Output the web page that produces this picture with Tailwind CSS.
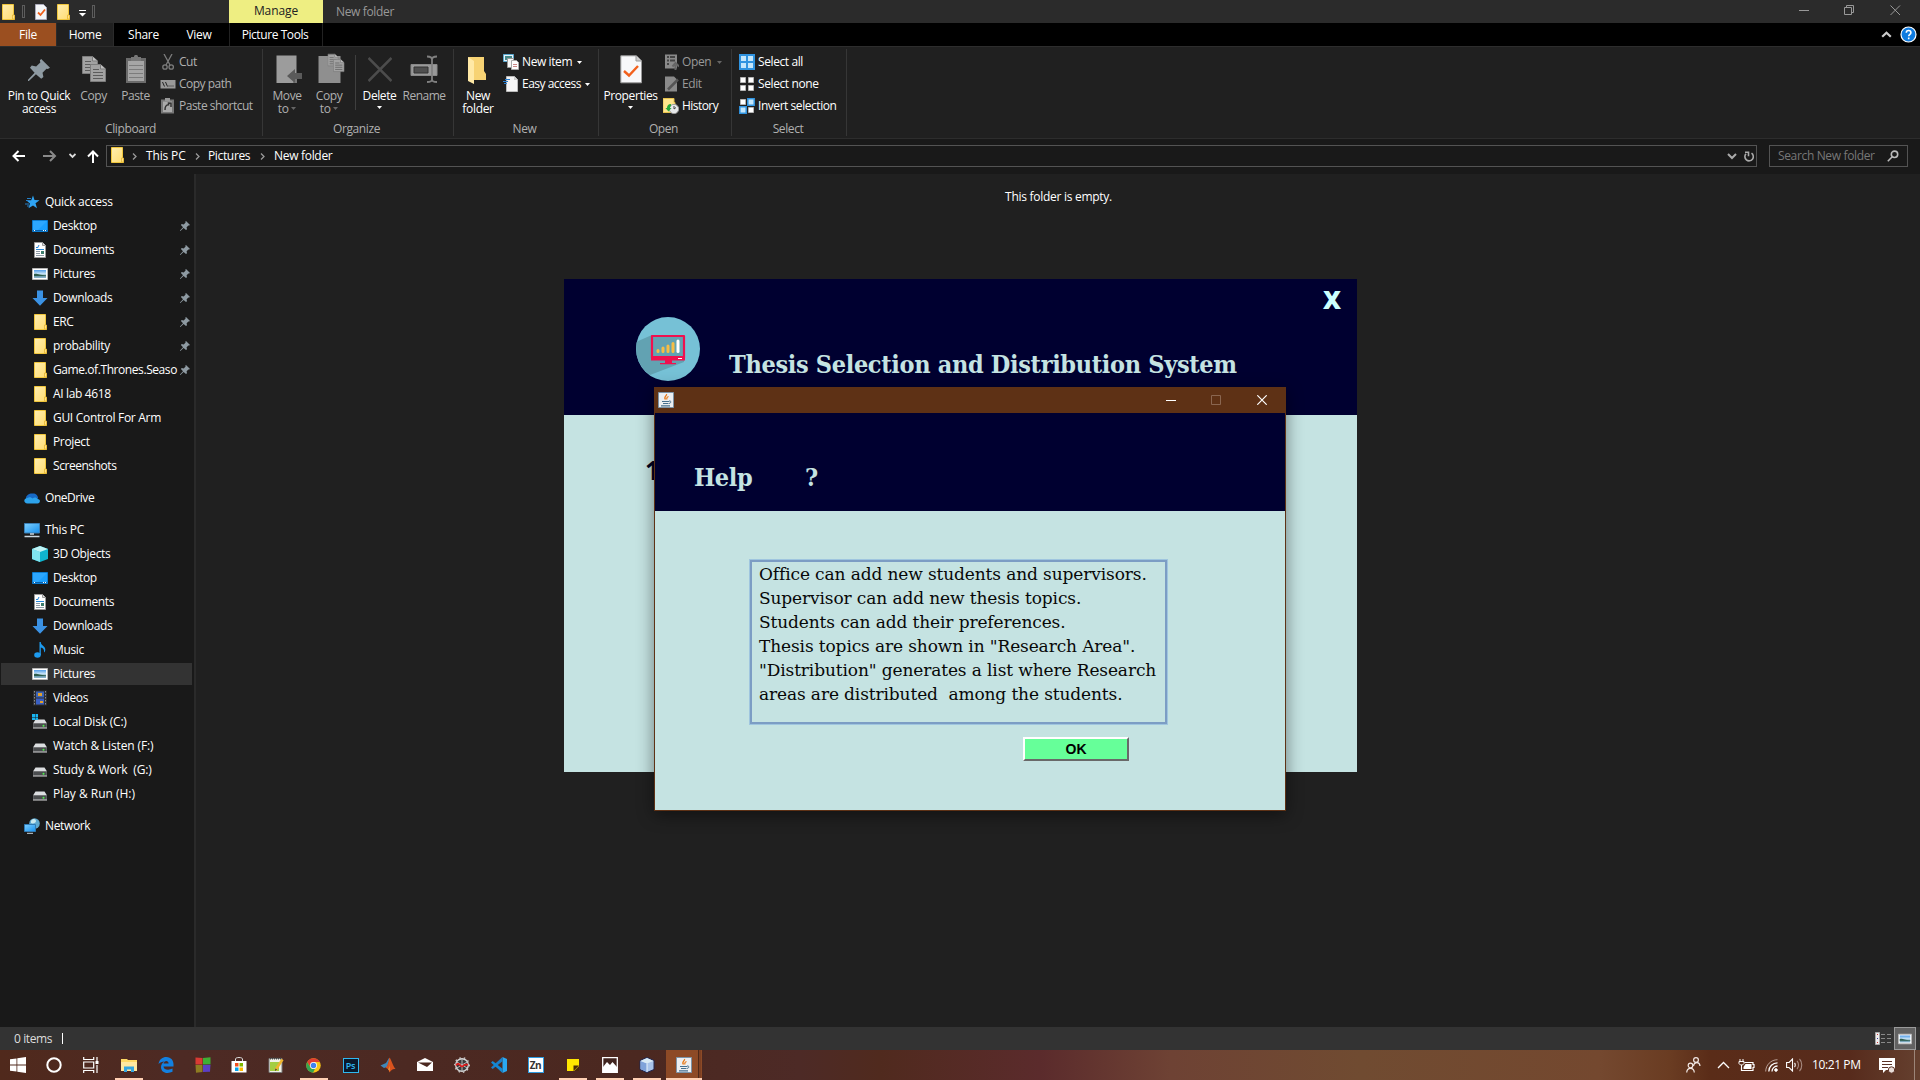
<!DOCTYPE html>
<html lang="en">
<head>
<meta charset="utf-8">
<title>New folder</title>
<script src="https://cdn.jsdelivr.net/npm/@tailwindcss/browser@4"></script>
</head>
<body class="w-[1920px] h-[1080px] overflow-hidden bg-[#202020] text-white text-[12px] leading-[13px] tracking-[-0.3px] font-['Segoe_UI','Open_Sans',sans-serif] select-none">
<svg class="absolute w-0 h-0">
  <defs>
    <linearGradient id="gf" x1="0" y1="0" x2="1" y2="1"><stop offset="0" stop-color="#ffeeb0"/><stop offset="1" stop-color="#ffdc70"/></linearGradient>
    <linearGradient id="gb" x1="0" y1="0" x2="1" y2="1"><stop offset="0" stop-color="#7fd0ff"/><stop offset="1" stop-color="#1690ee"/></linearGradient>
    <linearGradient id="gsky" x1="0" y1="0" x2="0" y2="1"><stop offset="0" stop-color="#4f9be8"/><stop offset=".5" stop-color="#cfe8f8"/><stop offset=".7" stop-color="#5f8f9a"/><stop offset="1" stop-color="#8fb9d4"/></linearGradient>
    <symbol id="folder" viewBox="0 0 16 16"><path d="M2.500.500h11v10l1 1v4h-12z" fill="url(#gf)" stroke="#f0c63c"/><path d="M12.500 15V11h2v4z" fill="#ffe08a" stroke="#e6b62e" stroke-width=".8"/></symbol>
    <symbol id="desktop" viewBox="0 0 16 16"><path d="M.5 2.500h15v11H.5z" fill="#1a9fff" stroke="#0b7bd0"/><path d="M1 3h14L5 13H1z" fill="#3db0ff" opacity=".5"/><path d="M1 12.500h14" stroke="#0a5fa8"/><path d="M2 12.500h1M11 12.500h1M13 12.500h1" stroke="#fff"/></symbol>
    <symbol id="doc" viewBox="0 0 16 16"><path d="M2.500.500h8l3 3v12h-11z" fill="#fff" stroke="#9a9a9a"/><path d="M10.500.500v3h3" fill="#ddd" stroke="#9a9a9a"/><path d="M4 7.500h8M4 5.500h2M7 3l-1.500 3" stroke="#2787d8"/><path d="M4 9.500h4M4 11.500h4M4 13.500h8" stroke="#8d9aa5"/><path d="M9 9h3v3H9z" fill="#3c7d6c"/></symbol>
    <symbol id="pic" viewBox="0 0 16 16"><path d="M.5 2.500h15v11H.5z" fill="#fff" stroke="#b5b5b5"/><path d="M2 4h12v8H2z" fill="url(#gsky)"/><path d="M2 8c3-1 5 1 12 1.500v.5H2z" fill="#2d5d4e"/></symbol>
    <symbol id="down" viewBox="0 0 16 16"><path d="M5 .5h6V8h4.500L8 15.700.500 8H5z" fill="#3b92e4"/></symbol>
    <symbol id="pin" viewBox="0 0 10 10"><path d="M6 0l4 4-1 .6-.6-.2L6.600 6.200 7 8.200l-1 .8L3.600 6.900.400 10H0v-.6L3 6.300.900 4l.8-1 2 .4L5.600 1.600 5.400.6z" fill="#8e9aa2"/></symbol>
    <symbol id="drive" viewBox="0 0 16 16"><path d="M3.500 5.500h9l2.500 4H1z" fill="#dcdee0"/><path d="M1 9.500h14v5H1z" fill="#6d6f71"/><path d="M1.500 10h13v3h-13z" fill="#4a4c4e"/><path d="M1 14h14" stroke="#b0b0b0"/><circle cx="11.500" cy="11.800" r="1" fill="#4df04a"/></symbol>
    <symbol id="caret" viewBox="0 0 5 3"><path d="M0 0h5L2.500 3z" fill="currentColor"/></symbol>
    <symbol id="java" viewBox="0 0 16 16"><path d="M.5.500h15v15H.5z" fill="#eceff2" stroke="#7d93a6"/><path d="M8.500 2c1 1.500-3.500 3-1 5.500M10.500 4.500c-2 1-2 1.500-1.500 3" fill="none" stroke="#e87817" stroke-width="1.300"/><path d="M4 9.500h7M5 11.500h5.500M3 13.800h9" stroke="#46708f" stroke-width="1.200"/><path d="M11 9c2.500-.5 2.500 2 0 2.500" fill="none" stroke="#46708f"/></symbol>
    <symbol id="page" viewBox="0 0 16 18"><path d="M.5.500h10l5 4.500v12.500H.5z" fill="#a2a2a2" stroke="#7d7d7d"/><path d="M10.500.500V5h5" fill="#c0c0c0" stroke="#7d7d7d"/><path d="M3 5.500h6M3 8.500h10M3 11.500h10M3 14.500h10" stroke="#5c5c5c"/></symbol>
  </defs>
</svg>

<div class="relative w-[1920px] h-[1080px] flex flex-col">
  <!-- title bar -->
  <header class="h-[23px] bg-[#2b2b2b] flex shrink-0">
    <div class="w-[229px] flex items-center">
      <svg class="w-4 h-4"><use href="#folder"/></svg>
      <i class="ml-[6px] w-[3px] h-[13px] border border-[#5d5d5d]"></i>
      <svg class="ml-[9px] w-[14px] h-4" viewBox="0 0 14 16"><path d="M1.500.500h8l3 3v12h-11z" fill="#f4f6f8" stroke="#aab"/><path d="M4 8.500l2.500 2.500L11 5.500" fill="none" stroke="#f0601c" stroke-width="1.800"/></svg>
      <svg class="ml-[7px] w-4 h-4"><use href="#folder"/></svg>
      <svg class="ml-[8px] mt-1 w-[7px] h-[7px]" viewBox="0 0 7 7"><path d="M0 .5h7" stroke="#fff"/><path d="M0 3h7L3.500 6.500z" fill="#fff"/></svg>
      <i class="ml-[6px] w-[3px] h-[13px] border border-[#5d5d5d]"></i>
    </div>
    <div class="w-[94px] bg-[#eeee82] text-[#222] text-center leading-[21px] tracking-[-0.1px]">Manage</div>
    <div class="pl-[13px] text-[#999] leading-[23px] tracking-[-0.35px]">New folder</div>
    <div class="ml-auto w-[121px] flex items-start pt-[5px] text-[#999]">
      <svg class="w-[11px] h-[11px]" viewBox="0 0 11 11"><path d="M0 5.500h10" stroke="currentColor"/></svg>
      <svg class="ml-[34px] w-[11px] h-[11px]" viewBox="0 0 11 11" fill="none" stroke="currentColor"><path d="M.5 2.500h7v7h-7zM2.500 2V.5h7v7H8"/></svg>
      <svg class="ml-[35px] w-[11px] h-[11px]" viewBox="0 0 11 11"><path d="M.5.500l9.500 9.500M10 .5L.5 10" stroke="currentColor"/></svg>
    </div>
  </header>

  <!-- ribbon tabs -->
  <nav class="h-[23px] bg-black flex shrink-0 text-center leading-[24px]">
    <div class="w-[56px] bg-[#9b4f20]">File</div>
    <div class="w-[58px] bg-[#202020] border-x border-[#2b2b2b]">Home</div>
    <div class="w-[59px]">Share</div>
    <div class="w-[52px]">View</div>
    <div class="ml-[4px] w-[94px] border-x border-[#222] pr-[2px] tracking-[-0.42px]">Picture Tools</div>
    <div class="ml-auto flex items-center w-[39px]">
      <svg class="w-[11px] h-[7px]" viewBox="0 0 11 7"><path d="M1.200 5.800L5.500 1.700l4.300 4.100" fill="none" stroke="#ccc" stroke-width="2.200"/></svg>
      <svg class="ml-[8px] w-[17px] h-[17px]" viewBox="0 0 17 17"><circle cx="8.500" cy="8.500" r="7.500" fill="#0f7be0" stroke="#fff" stroke-width="1.200"/><path d="M6.300 6.700c0-3 4.600-3 4.600 0 0 1.600-2.200 1.600-2.200 3.500M8.700 11.500v1.700" fill="none" stroke="#fff" stroke-width="1.600"/></svg>
    </div>
  </nav>

  <!-- ribbon -->
  <section class="h-[93px] bg-[#202020] border-y border-[#2d2d2d] flex shrink-0 text-center tracking-[-0.4px]">
    <div class="w-[263px] border-r border-[#363636] my-[2px] flex flex-col">
      <div class="flex h-[73px] pt-[6px]">
        <div class="w-[78px] flex flex-col items-center"><svg class="h-[34px] w-[22px] pt-[4px] pb-[8px]" viewBox="0 0 10 10"><use href="#pin"/></svg><span>Pin to Quick<br>access</span></div>
        <div class="w-[31px] flex flex-col items-center text-[#b0b0b0]"><svg class="w-[26px] h-[29px] mb-[5px]" viewBox="0 0 26 29"><use href="#page" x="1" y="0" width="16" height="20"/><use href="#page" x="9" y="8" width="16" height="20"/></svg>Copy</div>
        <div class="w-[51px] pl-[2px] flex flex-col items-center text-[#b0b0b0]"><svg class="w-[22px] h-[29px] mb-[5px]" viewBox="0 0 22 29"><path d="M1 3h20v25H1z" fill="#6b6b6b"/><path d="M3 6h16v20H3z" fill="#a6a6a6"/><path d="M6 2h3c0-3 4-3 4 0h3v4H6z" fill="#777"/><path d="M4 10.500h14M4 14.500h14M4 18.500h14M4 22.500h14" stroke="#7c7c7c"/></svg>Paste</div>
        <div class="flex flex-col text-left text-[#b0b0b0] -mt-[5px] [&_svg]:mt-[2px] tracking-[-0.5px]">
          <div class="h-[22px] flex items-center gap-[3px]"><svg class="w-4 h-4" viewBox="0 0 16 16" fill="none" stroke="#7c7c7c" stroke-width="1.300"><path d="M4 0l6 11M12 0L6 11"/><circle cx="5" cy="13" r="2.200"/><circle cx="11.200" cy="13" r="2.200"/></svg>Cut</div>
          <div class="h-[22px] flex items-center gap-[3px]"><svg class="w-4 h-4" viewBox="0 0 16 16"><path d="M.5 4h15v8.500H.5z" fill="#999"/><path d="M2.500 6l2 4.500M5.500 6l2 4.500M8.500 10h1M10.500 10h1M12.500 10h1" stroke="#222"/></svg>Copy path</div>
          <div class="h-[22px] flex items-center gap-[3px]"><svg class="w-4 h-4" viewBox="0 0 16 16"><path d="M1 1.500h13v14H1z" fill="#777"/><path d="M3 3.500h9v10.500H3z" fill="#aaa"/><path d="M5 0h5v3H5z" fill="#999"/><path d="M5 12c0-4 1-5 3.500-5.200V5l2.500.2V9" fill="none" stroke="#333" stroke-width="1.500"/></svg>Paste shortcut</div>
        </div>
      </div>
      <span class="text-[#b0b0b0] pr-[1px]">Clipboard</span>
    </div>
    <div class="w-[191px] border-r border-[#363636] my-[2px] flex flex-col">
      <div class="flex h-[73px] pt-[6px]">
        <div class="w-[48px] flex flex-col items-center text-[#b0b0b0]"><svg class="w-[27px] h-[29px] mb-[5px] ml-[5px]" viewBox="0 0 27 29"><path d="M.5.500h20V28H.5z" fill="#9c9c9c"/><path d="M17 24h4v4h-4z" fill="#777"/><path d="M11 21l8-7v4h7v6h-7v4z" fill="#5a5a5a"/></svg><span>Move<br>to <svg class="inline w-[5px] h-[3px] mb-[2px] text-[#666]"><use href="#caret"/></svg></span></div>
        <div class="w-[36px] flex flex-col items-center text-[#b0b0b0]"><svg class="w-[27px] h-[31px] -mt-[2px] mb-[5px] ml-[5px]" viewBox="0 0 27 31"><path d="M.5 3h22v27H.5z" fill="#8f8f8f"/><use href="#page" x="9.500" y="0" width="11" height="14"/><use href="#page" x="15" y="5" width="11.500" height="15"/></svg><span>Copy<br>to <svg class="inline w-[5px] h-[3px] mb-[2px] text-[#666]"><use href="#caret"/></svg></span></div>
        <i class="ml-[8px] w-px h-[55px] bg-[#3f3f3f]"></i>
        <div class="w-[47px] flex flex-col items-center"><svg class="w-[24px] h-[29px] mb-[5px]" viewBox="0 0 24 29"><path d="M.5 3l23 23M23.500 3L.5 26" stroke="#4c4c4c" stroke-width="2.600"/></svg><span>Delete</span><svg class="mt-[4px] w-[5px] h-[3px]"><use href="#caret"/></svg></div>
        <div class="w-[41px] pl-[1px] flex flex-col items-center text-[#b0b0b0] tracking-[-0.5px]"><svg class="w-[28px] h-[29px] mb-[5px]" viewBox="0 0 28 29"><path d="M1 9.500h26v11H1z" fill="#999" stroke="#888"/><path d="M4 12h14v6H4z" fill="#4f4f4f" stroke="#333"/><path d="M17 1.500c3 0 5 1 5 3v20c0 2-2 2.500-5 2.500M27 1.500c-3 0-5 1-5 3M27 27c-3 0-5-.5-5-2.500" fill="none" stroke="#808080" stroke-width="1.800"/></svg>Rename</div>
      </div>
      <span class="text-[#b0b0b0] pr-[3px]">Organize</span>
    </div>
    <div class="w-[145px] border-r border-[#363636] my-[2px] flex flex-col">
      <div class="flex h-[73px] pt-[6px]">
        <div class="w-[48px] flex flex-col items-center tracking-[-0.3px]"><svg class="w-[20px] h-[29px] mb-[5px] ml-[-3px]" viewBox="0 0 20 29"><path d="M1 2h16v14l2 3v6H7z" fill="#f7d374"/><path d="M1 2l6 4v23l-6-3z" fill="#ffe9a6"/></svg><span>New<br>folder</span></div>
        <div class="flex flex-col text-left -mt-[5px] [&_svg]:mt-[2px] pl-[1px]">
          <div class="h-[22px] flex items-center gap-[3px]"><svg class="w-4 h-4" viewBox="0 0 16 16"><path d="M.5.500h10v7H.5z" fill="#e6f2fb" stroke="#5aa8cf"/><path d="M2 2h7v4H2z" fill="#488"/><path d="M4.500 4.500h6v9h-6z" fill="#f8f8f8" stroke="#999"/><path d="M8.500 6.500h5l2 2v7h-7z" fill="#fff" stroke="#aaa"/><path d="M10 10.500h4M10 12.500h4" stroke="#c88"/></svg>New item<svg class="ml-[2px] w-[5px] h-[3px]"><use href="#caret"/></svg></div>
          <div class="h-[22px] flex items-center gap-[3px] tracking-[-0.5px]"><svg class="w-4 h-4" viewBox="0 0 16 16"><path d="M3.500.500h8l3 3v12h-11z" fill="#f6f6f6" stroke="#bbb"/><path d="M11 .5V4h3.500" fill="#ccc"/><path d="M2 3.500h5M0 5.500h5M1 7.500h3" stroke="#2a7fd0"/></svg>Easy access<svg class="ml-[1px] w-[5px] h-[3px]"><use href="#caret"/></svg></div>
        </div>
      </div>
      <span class="text-[#b0b0b0] pr-[3px]">New</span>
    </div>
    <div class="w-[133px] border-r border-[#363636] my-[2px] flex flex-col">
      <div class="flex h-[73px] pt-[6px]">
        <div class="w-[64px] pr-[1px] flex flex-col items-center"><svg class="w-[22px] h-[29px] mb-[5px]" viewBox="0 0 22 29"><path d="M.8.800h15.700l5 5v22H.8z" fill="#f7f8fa" stroke="#999"/><path d="M16 1v5h5" fill="#ccc" stroke="#999"/><path d="M4 16l5 4.500 9-9.500" fill="none" stroke="#f2611d" stroke-width="2.400"/></svg><span>Properties</span><svg class="mt-[4px] w-[5px] h-[3px]"><use href="#caret"/></svg></div>
        <div class="flex flex-col text-left -mt-[5px] [&_svg]:mt-[2px]">
          <div class="h-[22px] flex items-center gap-[3px] text-[#999]"><svg class="w-4 h-4" viewBox="0 0 16 16"><path d="M2 .5h12v14H2z" fill="#8a8a8a"/><path d="M4 3h2M4 6.500h2M4 10h2M7 3h5M7 6.500h5" stroke="#444" stroke-width="1.800"/><path d="M12.500 16v-5M9.500 12.500l3-3.500 3.500 3.500" stroke="#666" stroke-width="2" fill="none"/></svg>Open<svg class="ml-[3px] w-[5px] h-[3px] text-[#666]"><use href="#caret"/></svg></div>
          <div class="h-[22px] flex items-center gap-[3px] text-[#999]"><svg class="w-4 h-4" viewBox="0 0 16 16"><path d="M2 .5h9l3 3v12H2z" fill="#8a8a8a"/><path d="M5 13.500L15 3.500" stroke="#555" stroke-width="2.500"/></svg>Edit</div>
          <div class="h-[22px] flex items-center gap-[3px] tracking-[-0.55px]"><svg class="w-4 h-4" viewBox="0 0 16 16"><path d="M0 .5h11v4h1v10H0z" fill="#ffe58c" stroke="#e7c24c"/><circle cx="11" cy="11" r="4.700" fill="#e6e8ea" stroke="#999"/><path d="M11 8v3l2-1.500" fill="none" stroke="#444"/><path d="M8 6c-3 0-4 2-4 4H2.500L5.500 13.500 8.500 10H7c0-1 .5-2 1-2z" fill="#26a83a"/></svg>History</div>
        </div>
      </div>
      <span class="text-[#b0b0b0] pr-[3px]">Open</span>
    </div>
    <div class="w-[115px] border-r border-[#363636] my-[2px] flex flex-col">
      <div class="flex h-[73px] pt-[6px]">
        <div class="flex flex-col text-left -mt-[5px] [&_svg]:mt-[2px] pl-[7px]">
          <div class="h-[22px] flex items-center gap-[3px]"><svg class="w-4 h-4" viewBox="0 0 16 16"><path d="M0 0h16v16H0z" fill="#2f93e0"/><path d="M2 2h5v5H2zM9 2h5v5H9zM2 9h5v5H2zM9 9h5v5H9z" fill="#c4e6fb"/></svg>Select all</div>
          <div class="h-[22px] flex items-center gap-[3px]"><svg class="w-4 h-4" viewBox="0 0 16 16" fill="#fff" stroke="#b5b5b5"><path d="M1.500 1.500h5v5h-5zM9.500 1.500h5v5h-5zM1.500 9.500h5v5h-5zM9.500 9.500h5v5h-5z"/></svg>Select none</div>
          <div class="h-[22px] flex items-center gap-[3px] tracking-[-0.45px]"><svg class="w-4 h-4" viewBox="0 0 16 16"><path d="M1.500 1.500h5v5h-5zM9.500 9.500h5v5h-5z" fill="#fff" stroke="#b5b5b5"/><path d="M8.800.800h6.400v6.400H8.800zM.8 8.800h6.400v6.400H.8z" fill="#c4e6fb" stroke="#2f93e0" stroke-width="1.500"/></svg>Invert selection</div>
        </div>
      </div>
      <span class="text-[#b0b0b0] pr-[2px]">Select</span>
    </div>
  </section>

  <!-- address bar -->
  <section class="h-[35px] bg-[#191919] flex shrink-0 pt-[6px]">
    <div class="w-[106px] flex items-center h-[22px] text-white">
      <svg class="ml-[12px] w-[14px] h-[12px]" viewBox="0 0 14 12" fill="none" stroke="#fff" stroke-width="2"><path d="M1.500 6H13M6.500 1l-5 5 5 5"/></svg>
      <svg class="ml-[17px] w-[14px] h-[12px]" viewBox="0 0 14 12" fill="none" stroke="#8a8a8a" stroke-width="2"><path d="M0 6h12M7 1l5 5-5 5"/></svg>
      <svg class="ml-[12px] w-[7px] h-[6px]" viewBox="0 0 7 6" fill="none" stroke="#ddd" stroke-width="1.800"><path d="M.5 1l3 3 3-3"/></svg>
      <svg class="ml-[11px] w-[12px] h-[13px]" viewBox="0 0 12 13" fill="none" stroke="#fff" stroke-width="2"><path d="M6 13V1.500M1 6.500l5-5 5 5"/></svg>
    </div>
    <div class="w-[1651px] h-[22px] border border-[#535353] flex items-center">
      <svg class="ml-[2px] w-4 h-4 -mt-[2px]"><use href="#folder"/></svg>
      <svg class="ml-[7px] w-[5px] h-[7px]" viewBox="0 0 5 7" fill="none" stroke="#999" stroke-width="1.300"><path d="M1 .5l3 3-3 3"/></svg>
      <span class="ml-[9px] w-[49px] -mt-[2px] tracking-[-0.15px]">This PC</span>
      <svg class="w-[5px] h-[7px]" viewBox="0 0 5 7" fill="none" stroke="#999" stroke-width="1.300"><path d="M1 .5l3 3-3 3"/></svg>
      <span class="ml-[8px] w-[52px] -mt-[2px] tracking-[-0.35px]">Pictures</span>
      <svg class="w-[5px] h-[7px]" viewBox="0 0 5 7" fill="none" stroke="#999" stroke-width="1.300"><path d="M1 .5l3 3-3 3"/></svg>
      <span class="ml-[9px] -mt-[2px]">New folder</span>
      <svg class="ml-auto w-[10px] h-[7px]" viewBox="0 0 10 7" fill="none" stroke="#aaa" stroke-width="2"><path d="M1 1l4 4 4-4"/></svg>
      <svg class="ml-[7px] mr-[2px] w-[10px] h-[11px]" viewBox="0 0 10 11" fill="none" stroke="#aaa" stroke-width="1.600"><path d="M7.500 2.200A4.200 4.200 0 1 1 2 2.800M1 1.200h3.500v4"/></svg>
    </div>
    <div class="ml-[12px] w-[139px] h-[22px] border border-[#535353] flex items-center text-[#777] pl-[8px] tracking-[-0.35px]"><span class="-mt-[2px]">Search New folder</span>
      <svg class="ml-auto mr-[8px] w-[12px] h-[12px]" viewBox="0 0 12 12" fill="none" stroke="#bbb" stroke-width="1.600"><circle cx="7.500" cy="4.300" r="3.200"/><path d="M5 7L.8 11.200"/></svg>
    </div>
  </section>

  <!-- navigation and contents -->
  <main class="flex-1 flex min-h-0">
    <aside class="w-[194px] bg-[#191919] pt-[16px] flex flex-col gap-[8px] leading-[22px] tracking-[-0.35px]">
      <ul>
        <li class="h-6 flex items-center pl-6"><svg class="w-4 h-4 mr-[5px]" viewBox="0 0 16 16"><path d="M9 1.500l1.500 4.500 5 .3-4 3 1.500 5-4-2.800-4.500 2.800L6 9.500 2.500 6.500l4.700-.3z" fill="#2fa4f3"/><path d="M3 4.500h4M2 6.500h4M1 10h4M3 12h3" stroke="#2580c9"/></svg><span class="tracking-[-0.3px]">Quick access</span></li>
        <li class="h-6 flex items-center pl-8"><svg class="w-4 h-4 mr-[5px]"><use href="#desktop"/></svg>Desktop<svg class="ml-auto mr-1 w-[10px] h-[10px]"><use href="#pin"/></svg></li>
        <li class="h-6 flex items-center pl-8"><svg class="w-4 h-4 mr-[5px]"><use href="#doc"/></svg>Documents<svg class="ml-auto mr-1 w-[10px] h-[10px]"><use href="#pin"/></svg></li>
        <li class="h-6 flex items-center pl-8"><svg class="w-4 h-4 mr-[5px]"><use href="#pic"/></svg>Pictures<svg class="ml-auto mr-1 w-[10px] h-[10px]"><use href="#pin"/></svg></li>
        <li class="h-6 flex items-center pl-8"><svg class="w-4 h-4 mr-[5px]"><use href="#down"/></svg>Downloads<svg class="ml-auto mr-1 w-[10px] h-[10px]"><use href="#pin"/></svg></li>
        <li class="h-6 flex items-center pl-8"><svg class="w-4 h-4 mr-[5px]"><use href="#folder"/></svg>ERC<svg class="ml-auto mr-1 w-[10px] h-[10px]"><use href="#pin"/></svg></li>
        <li class="h-6 flex items-center pl-8"><svg class="w-4 h-4 mr-[5px]"><use href="#folder"/></svg><span class="tracking-[-0.3px]">probability</span><svg class="ml-auto mr-1 w-[10px] h-[10px]"><use href="#pin"/></svg></li>
        <li class="h-6 flex items-center pl-8"><svg class="w-4 h-4 mr-[5px] shrink-0"><use href="#folder"/></svg><span class="whitespace-nowrap tracking-[-0.42px]">Game.of.Thrones.Seaso</span><svg class="ml-auto mr-1 w-[10px] h-[10px] shrink-0"><use href="#pin"/></svg></li>
        <li class="h-6 flex items-center pl-8"><svg class="w-4 h-4 mr-[5px]"><use href="#folder"/></svg>AI lab 4618</li>
        <li class="h-6 flex items-center pl-8"><svg class="w-4 h-4 mr-[5px]"><use href="#folder"/></svg><span class="tracking-[-0.3px]">GUI Control For Arm</span></li>
        <li class="h-6 flex items-center pl-8"><svg class="w-4 h-4 mr-[5px]"><use href="#folder"/></svg>Project</li>
        <li class="h-6 flex items-center pl-8"><svg class="w-4 h-4 mr-[5px]"><use href="#folder"/></svg><span class="tracking-[-0.45px]">Screenshots</span></li>
      </ul>
      <ul>
        <li class="h-6 flex items-center pl-6"><svg class="w-4 h-4 mr-[5px]" viewBox="0 0 16 16"><path d="M2 8c0-3 4-5 6.500-4.500C11 3 14 5 14 8l-3 5H3z" fill="#1769c5"/><path d="M3.500 13.500C-1 13.500-.5 8 3.500 8c2-1.500 4-.5 5 .5 2-1.500 4-1 5 .5 3.500 0 3 4.500 0 4.500z" fill="#2da3ec"/></svg><span class="tracking-[-0.45px]">OneDrive</span></li>
      </ul>
      <ul>
        <li class="h-6 flex items-center pl-6"><svg class="w-4 h-4 mr-[5px]" viewBox="0 0 16 16"><path d="M.5 1.500h15v9.500H.5z" fill="url(#gb)" stroke="#3b7fb5"/><path d="M6 12h4M.500 14.500h15" stroke="#c9d6e0" stroke-width="1.400"/></svg><span class="tracking-[-0.2px]">This PC</span></li>
        <li class="h-6 flex items-center pl-8"><svg class="w-4 h-4 mr-[5px]" viewBox="0 0 16 16"><path d="M8 0l8 3v10l-8 3-8-3V3z" fill="#0fb4cf"/><path d="M0 3l8 3v10l-8-3z" fill="#7fe3ee"/><path d="M8 0l8 3-8 3-8-3z" fill="#bff3f5"/></svg>3D Objects</li>
        <li class="h-6 flex items-center pl-8"><svg class="w-4 h-4 mr-[5px]"><use href="#desktop"/></svg>Desktop</li>
        <li class="h-6 flex items-center pl-8"><svg class="w-4 h-4 mr-[5px]"><use href="#doc"/></svg>Documents</li>
        <li class="h-6 flex items-center pl-8"><svg class="w-4 h-4 mr-[5px]"><use href="#down"/></svg>Downloads</li>
        <li class="h-6 flex items-center pl-8"><svg class="w-4 h-4 mr-[5px]" viewBox="0 0 16 16"><ellipse cx="5.500" cy="13" rx="3.300" ry="2.700" fill="#1d9bf0"/><path d="M7.500 0h1.300c0 3.500 4.500 4 4.500 7.500 0 1.500-.6 2.500-1.300 3 .5-3-1-4.500-3.200-5V13H7.500z" fill="#1d9bf0"/></svg>Music</li>
        <li class="h-6 flex items-center py-px pl-px pr-[2px]"><div class="h-[22px] w-full bg-[#333] flex items-center pl-[31px]"><svg class="w-4 h-4 mr-[5px]"><use href="#pic"/></svg>Pictures</div></li>
        <li class="h-6 flex items-center pl-8"><svg class="w-4 h-4 mr-[5px]" viewBox="0 0 16 16"><path d="M1 .5h14v15H1z" fill="#2e2e30"/><path d="M2.500 1v14M13.500 1v14" stroke="#8b8b8b" stroke-dasharray="1.500 1.500"/><path d="M4 1.500h8v6H4z" fill="#3b62b5"/><path d="M4 8.500h8v6H4z" fill="#3a5fc2"/><path d="M6 3h4v3H6zM8 11h3v2H8z" fill="#e0a02c"/></svg>Videos</li>
        <li class="h-6 flex items-center pl-8"><svg class="w-4 h-4 mr-[5px]" viewBox="0 0 16 16"><use href="#drive"/><path d="M0 0h3v3H0zM3.500 0H6v3H3.500zM0 3.500h3V6H0zM3.500 3.500H6V6H3.500z" fill="#18b4f0"/></svg><span class="tracking-[-0.2px]">Local Disk (C:)</span></li>
        <li class="h-6 flex items-center pl-8"><svg class="w-4 h-4 mr-[5px]"><use href="#drive"/></svg><span class="tracking-[-0.14px]">Watch &amp; Listen (F:)</span></li>
        <li class="h-6 flex items-center pl-8"><svg class="w-4 h-4 mr-[5px]"><use href="#drive"/></svg><span class="tracking-[-0.14px]">Study &amp; Work&nbsp; (G:)</span></li>
        <li class="h-6 flex items-center pl-8"><svg class="w-4 h-4 mr-[5px]"><use href="#drive"/></svg><span class="tracking-[-0.02px]">Play &amp; Run (H:)</span></li>
      </ul>
      <ul>
        <li class="h-6 flex items-center pl-6"><svg class="w-4 h-4 mr-[5px]" viewBox="0 0 16 16"><circle cx="10.500" cy="5.500" r="5.300" fill="#5fa9d0"/><path d="M7 3c2-3 5-2 5 0s-3 3-5 2z" fill="#c9e8ef"/><path d="M.5 6.500h11v7H.5z" fill="url(#gb)" stroke="#2f7ab5"/><path d="M3 15.300h6" stroke="#c9d6e0"/></svg>Network</li>
      </ul>
    </aside>
    <div class="w-[2px] bg-[#2a2a2a]"></div>
    <div class="flex-1 bg-[#202020] pt-[16px] text-center pr-[1px]"><p class="pl-[2px] tracking-[-0.28px]">This folder is empty.</p></div>
  </main>

  <!-- status bar -->
  <footer class="h-[23px] bg-[#333] flex shrink-0 items-center">
    <span class="ml-[14px] text-[#ddd] tracking-[-0.4px]">0 items</span><i class="ml-[10px] w-px h-[11px] bg-white"></i>
    <svg class="ml-auto w-[16px] h-[13px]" viewBox="0 0 16 13"><path d="M.5.500h4v12h-4z" fill="#eee" stroke="#aaa"/><path d="M2 2.500h1M2 10.500h1" stroke="#c33"/><path d="M2 6.500h1" stroke="#339"/><path d="M6 2.500h4M12 2.500h4M6 6.500h4M12 6.500h4M6 10.500h4M12 10.500h4" stroke="#888"/></svg>
    <div class="ml-[3px] mr-[4px] w-[22px] h-[23px] bg-[#626262] border border-[#9a9a9a] grid place-items-center"><svg class="w-[14px] h-[14px]"><use href="#pic"/></svg></div>
  </footer>

  <!-- taskbar -->
  <footer class="h-[30px] flex shrink-0 bg-[linear-gradient(90deg,#50291c_0,#4d2a24_180px,#4b2820_640px,#4d2a26_800px,#502a1e_880px,#5b2b2c_1040px,#6e4234_1170px,#704b31_1360px,#74482f_1600px,#6a3c22_1670px,#5a2c18_1710px,#572b1c_1850px,#65402f_1920px)]">
    <div class="w-9 grid place-items-center"><svg class="w-4 h-4" viewBox="0 0 16 16" fill="#fff"><path d="M0 2.300l6.500-.9v6.200H0zM7.300 1.300L16 0v7.600H7.300zM0 8.400h6.500v6.200L0 13.700zM7.300 8.400H16V16l-8.700-1.200z"/></svg></div>
    <div class="w-9 grid place-items-center"><svg class="w-4 h-4" viewBox="0 0 16 16"><circle cx="8" cy="8" r="6.700" fill="none" stroke="#fff" stroke-width="2"/></svg></div>
    <div class="w-[38px] pr-px grid place-items-center"><svg class="w-4 h-4" viewBox="0 0 16 16" fill="none" stroke="#fff" stroke-width="1.200"><path d="M.7 0v2.500h10V0M.7 16v-2.500h10V16M.7 5h10v6H.7zM14 0v4M14 8v8"/><path d="M12.500 4h3v3h-3z" fill="#fff" stroke="none"/></svg></div>
    <div class="w-[37px] relative grid place-items-center"><svg class="w-4 h-4" viewBox="0 0 16 16"><path d="M0 2h6l1 1h9v11H0z" fill="#ffd965"/><path d="M0 5h16v9H0z" fill="#ffe8a0"/><path d="M3 15V9.500h10V15h-3v-2.500H6V15z" fill="#34a6e0"/></svg><i class="absolute bottom-0 left-[5px] w-7 h-[2px] bg-[#ffd0b4]"></i></div>
    <div class="w-[37px] grid place-items-center"><svg class="w-4 h-4" viewBox="0 0 16 16"><path d="M.5 7C1.500 2 4.500 0 8.300 0c5 0 7.200 3.800 7.200 7.300V9.500H5.500c.2 3.500 5.500 4 9 2v3.300C9.500 17.300 3 16 3 10c0-2.500 1.500-4.400 3.500-5.500C4 4.600 1.800 5.500.5 7zM5.600 6.500h5c0-3.500-4.500-3.500-5 0z" fill="#1380e0"/></svg></div>
    <div class="w-[37px] grid place-items-center"><svg class="w-4 h-4" viewBox="0 0 16 16"><path d="M.5.500l7 .6V7.500H.5z" fill="#d93a33"/><path d="M8 1.100L15.500.3v6.900L8 7.500z" fill="#3eae35"/><path d="M.5 8h7v7L1 15.700z" fill="#8e7c22"/><path d="M8 8l7.500-.3-.5 7L8 15z" fill="#5b3fc4"/></svg></div>
    <div class="w-[36px] grid place-items-center"><svg class="w-4 h-4" viewBox="0 0 16 16"><path d="M4.500 5V2c0-2 7-2 7 0v3" fill="none" stroke="#ddd"/><path d="M.5 4h15v11.500H.5z" fill="#fff"/><path d="M4 6h3.500v3.500H4z" fill="#f2501d"/><path d="M8.500 6H12v3.500H8.500z" fill="#7fb800"/><path d="M4 10.500h3.500V14H4z" fill="#01a3ee"/><path d="M8.500 10.500H12V14H8.500z" fill="#ffb800"/></svg></div>
    <div class="w-[38px] grid place-items-center"><svg class="w-4 h-4" viewBox="0 0 16 16"><path d="M1 1.500h13v14H1z" fill="#f0f2e8" stroke="#777"/><path d="M2 5h9v9H2z" fill="#a3ce42"/><path d="M2 1.500h12" stroke="#444" stroke-width="2" stroke-dasharray="1 1"/><path d="M7.500 13L14.500 2.500" stroke="#efb42e" stroke-width="2.500"/><path d="M7 14l.5-2.500 1.500 1z" fill="#333"/></svg></div>
    <div class="w-[37px] relative grid place-items-center"><svg class="w-[15px] h-[15px]" viewBox="0 0 16 16"><circle cx="8" cy="8" r="7.700" fill="#f8c517"/><path d="M1.200 4.300A7.700 7.700 0 0 1 14.800 4.300H8L4.700 9.500z" fill="#e23e30"/><path d="M1.200 4.300L4.900 10c1 1.600 2.600 2 4.600 1.600L7.500 15.700A7.700 7.700 0 0 1 1.200 4.300z" fill="#35a551"/><circle cx="8" cy="8" r="3.700" fill="#fff"/><circle cx="8" cy="8" r="2.900" fill="#3f82f0"/></svg><i class="absolute bottom-0 left-[5px] w-7 h-[2px] bg-[#ffd0b4]"></i></div>
    <div class="w-[37px] grid place-items-center"><div class="w-4 h-[15px] border border-[#30b8f0] bg-[#0a1a2c] text-[#30b8f0] text-[9px] leading-[13px] font-semibold text-center tracking-[-0.3px]">Ps</div></div>
    <div class="w-[37px] grid place-items-center"><svg class="w-4 h-4" viewBox="0 0 16 16"><path d="M.5 8.500L6 6l3-5 1 1-3 8-3 1z" fill="#3f87b9"/><path d="M9.500.500C11 2 13 9 15.500 12c-3-.5-4 1-6 3.500C9 13 7.500 11 5.500 11 8 9 8.500 4 9.500.500z" fill="#d9531e"/><path d="M9.700 2c.5 4 .3 8-1.500 10.500 1 .5 1.300 1.500 1.500 2.500z" fill="#f5a13a"/></svg></div>
    <div class="w-[37px] grid place-items-center"><svg class="w-4 h-4" viewBox="0 0 16 16"><path d="M0 5l8-4 8 4v9H0z" fill="#fff"/><path d="M1 5.500l9 4.500 5-4.500z" fill="#4b2820"/></svg></div>
    <div class="w-[37px] grid place-items-center"><svg class="w-4 h-4" viewBox="0 0 16 16"><circle cx="8" cy="8" r="6.300" fill="#3b3b3b" stroke="#d5d5d5" stroke-width="1.400"/><circle cx="8" cy="8" r="7.300" fill="none" stroke="#ccc" stroke-width="1.300" stroke-dasharray="1.500 3"/><path d="M8 2v12M2.800 5l10.400 6M13.200 5L2.800 11" stroke="#bbb"/><path d="M2 8.500c3-5 5 3 7 .5s3-1 5-1.500" fill="none" stroke="#e31c1c" stroke-width="1.700"/></svg></div>
    <div class="w-[37px] grid place-items-center"><svg class="w-4 h-4" viewBox="0 0 16 16"><path d="M11.500 0L16 2v12l-4.500 2z" fill="#2aa7f0"/><path d="M11.500 0v4.300L1.700 12 0 10.600z" fill="#1b80c9"/><path d="M11.500 16v-4.300L1.700 4 0 5.400z" fill="#1289d6"/></svg></div>
    <div class="w-[37px] grid place-items-center"><div class="w-4 h-4 border border-[#2d9be0] bg-white text-[#333] text-[10px] leading-[15px] font-bold text-center tracking-[-0.5px]">Zn</div></div>
    <div class="w-[37px] relative grid place-items-center"><svg class="w-3 h-3" viewBox="0 0 12 12"><path d="M0 0h12v7l-5 5H0z" fill="#ffe600"/><path d="M12 6.500L6.500 12V6.500zM12 8v4H8z" fill="#46280a"/></svg><i class="absolute bottom-0 left-[5px] w-7 h-[2px] bg-[#ffd0b4]"></i></div>
    <div class="w-[37px] relative grid place-items-center"><svg class="w-4 h-4" viewBox="0 0 16 16"><path d="M.7.700h14.600v14.600H.7z" fill="#40241e" stroke="#fff" stroke-width="1.300"/><path d="M1 10l4-5 3 3 2.500-3L15 10v5H1z" fill="#fff"/></svg><i class="absolute bottom-0 left-[5px] w-7 h-[2px] bg-[#ffd0b4]"></i></div>
    <div class="w-[37px] relative grid place-items-center"><svg class="w-4 h-4" viewBox="0 0 16 16"><path d="M8 .5l7 3v9l-7 3-7-3v-9z" fill="#a8c4ea" stroke="#20264f"/><path d="M1.500 4L8 6.500V15l-6.500-3z" fill="#7fa3da"/><path d="M8 1l6.500 3L8 6.500 1.500 4z" fill="#d8eaf5"/><path d="M8 6.500V15" stroke="#e8f2fa"/></svg><i class="absolute bottom-0 left-[5px] w-7 h-[2px] bg-[#ffd0b4]"></i></div>
    <div class="w-[36px] ml-[1px] border-b-2 border-[#ffd0b4] bg-[#8d4a26] flex items-center"><svg class="ml-[10px] mt-[2px] w-4 h-4"><use href="#java"/></svg><i class="ml-[6px] w-[3px] h-full border-l border-[#4d2818] bg-[#7d4023]"></i></div>

    <div class="ml-auto flex items-center text-white">
      <svg class="w-[15px] h-4" viewBox="0 0 15 16" fill="none" stroke="#f2e8e4" stroke-width="1.200"><circle cx="10" cy="3" r="2.400"/><circle cx="4.500" cy="8.500" r="2.300"/><path d="M7.500 9c.5-4 6-5 6.500 0M.7 15.500c.3-5.500 7.300-5.500 7.600 0"/></svg>
      <svg class="ml-[16px] w-[13px] h-[8px]" viewBox="0 0 13 8" fill="none" stroke="#fff" stroke-width="1.300"><path d="M1 7l5.500-5.500L12 7"/></svg>
      <svg class="ml-[8px] w-[17px] h-[13px]" viewBox="0 0 17 13"><path d="M6.500 3.500h8.500v2h1v3h-1v3H3.500v-3" fill="none" stroke="#fff" stroke-width="1.200"/><path d="M7.500 5h6v5h-8V8z" fill="#fff"/><path d="M1 2.500h5v2L4.500 6h-2L1 4.500zM2 0v2.500M5 0v2.500M3.500 6v3" fill="none" stroke="#fff"/></svg>
      <svg class="ml-[10px] w-[13px] h-[13px]" viewBox="0 0 13 13" fill="none" stroke="#fff"><path d="M.7 12.500C.7 6 6 .7 12.500.7" stroke="#b9a096"/><path d="M3.800 12.500c0-5 4-8.700 8.700-8.700M7 12.500c0-3 2.500-5.500 5.500-5.500" stroke-width="1.300"/><circle cx="11" cy="11" r="1.300" fill="#fff"/></svg>
      <svg class="ml-[8px] w-[17px] h-[14px]" viewBox="0 0 17 14" fill="none" stroke="#fff" stroke-width="1.100"><path d="M.6 4.500h2.500L6.500 1v12L3 9.500H.6z"/><path d="M8.500 5c1 1 1 3 0 4"/><path d="M11 3c2 2 2 6 0 8M13.500 1c3 3 3 9 0 12" stroke="#a78a80"/></svg>
      <span class="ml-[9px] w-[49px] -mt-px whitespace-nowrap tracking-[-0.4px]">10:21 PM</span>
      <svg class="ml-[18px] w-[17px] h-[17px]" viewBox="0 0 17 17"><path d="M0 1h16v12H7l-3 3v-3H0z" fill="#fff"/><path d="M3 4.500h10M3 7.500h10M3 10.500h6" stroke="#5b3226" stroke-width="1.200"/><circle cx="12.500" cy="13" r="3.200" fill="#e8ddd8" stroke="#5b3226"/></svg>
      <i class="ml-[18px] w-px h-[30px] bg-[#9c8578]"></i><i class="w-[5px]"></i>
    </div>
  </footer>

  <!-- application window -->
  <div class="absolute left-[564px] top-[279px] w-[793px] h-[493px] bg-[#c5e3e2] font-['Roboto_Slab','DejaVu_Serif_Condensed','DejaVu_Serif',serif] font-bold tracking-normal">
    <div class="h-[136px] bg-[#000030] relative">
      <svg class="absolute left-[72px] top-[38px] w-16 h-16" viewBox="0 0 64 64"><circle cx="32" cy="32" r="32" fill="#76c1d6"/><path d="M1 24.500L16 18h32v27L14 58A32 32 0 0 1 1 24.500z" fill="#62a2b2"/><path d="M16 19h32v22H16z" fill="#62a2b2" stroke="#f0104f" stroke-width="2.200" stroke-linejoin="round"/><path d="M15 39h34v4.500H15zM29 43h7v3h4v1.300H24V46h5z" fill="#f0104f"/><path d="M42 41.500h4" stroke="#fff"/><g stroke-width="3" stroke-linecap="round" stroke="#f7bd45"><path d="M22 33.500v1M27 31v3.500M32 29v5.500M37 26.500v8"/><path d="M42 24v10.500" stroke="#fff"/></g></svg>
      <h1 class="absolute left-[165px] top-[69px] text-[25px] leading-[34px] tracking-[-0.33px] text-[#c5e3e2] whitespace-nowrap">Thesis Selection and Distribution System</h1>
      <span class="absolute left-[759px] top-[3px] text-[25px] leading-[34px] text-[#ccffff] font-extrabold font-['Open_Sans',sans-serif]">X</span>
    </div>
    <span class="absolute left-[81px] top-[174px] text-[26px] leading-[34px] text-[#000020] font-['Open_Sans',sans-serif]">1</span>
  </div>

  <!-- help dialog -->
  <div class="absolute left-[654px] top-[387px] w-[632px] h-[424px] border border-[#5e3115] bg-[#c5e3e2] shadow-[0_4px_16px_rgba(0,0,0,0.45)] flex flex-col font-['Roboto_Slab','DejaVu_Serif','DejaVu_Serif_Condensed',serif] tracking-normal">
    <div class="h-[25px] pb-px bg-[#5e3115] flex items-center shrink-0">
      <svg class="ml-[3px] w-4 h-4"><use href="#java"/></svg>
      <svg class="ml-auto w-[10px] h-[11px]" viewBox="0 0 10 11"><path d="M0 5.500h10" stroke="#fff"/></svg>
      <svg class="ml-[35px] w-[10px] h-[10px]" viewBox="0 0 10 10"><path d="M.5.500h9v9h-9z" fill="none" stroke="#8a6650"/></svg>
      <svg class="ml-[36px] mr-[18px] w-[10px] h-[10px]" viewBox="0 0 10 10"><path d="M.3.300l9.400 9.400M9.700.300L.3 9.700" stroke="#fff" stroke-width="1.200"/></svg>
    </div>
    <div class="h-[98px] bg-[#000030] shrink-0 flex pl-[39px] pt-[48px] text-[25px] leading-[34px] tracking-[-0.4px] font-bold text-[#c5e3e2] font-['Roboto_Slab','DejaVu_Serif_Condensed','DejaVu_Serif',serif]"><span class="w-[111px]">Help</span><span>?</span></div>
    <div class="flex flex-col pl-[94px] pt-[49px]">
      <div class="w-[419px] h-[166px] border-[3px] border-[#7c9dc4] outline-1 outline-[#9fc5df] -outline-offset-1 pl-[7px] -mt-px mb-px text-[17px] leading-[24px] tracking-[-0.12px] text-[#080808] whitespace-pre">Office can add new students and supervisors.
Supervisor can add new thesis topics.
Students can add their preferences.
Thesis topics are shown in "Research Area".
"Distribution" generates a list where Research
areas are distributed  among the students.</div>
      <div class="ml-[274px] mt-[11px] w-[106px] h-[24px] bg-[#66ff99] border-2 border-t-white border-l-white border-b-[#696969] border-r-[#696969] text-black text-[14px] leading-[21px] font-bold text-center font-['Liberation_Sans',sans-serif]">OK</div>
    </div>
  </div>
</div>
</body>
</html>
